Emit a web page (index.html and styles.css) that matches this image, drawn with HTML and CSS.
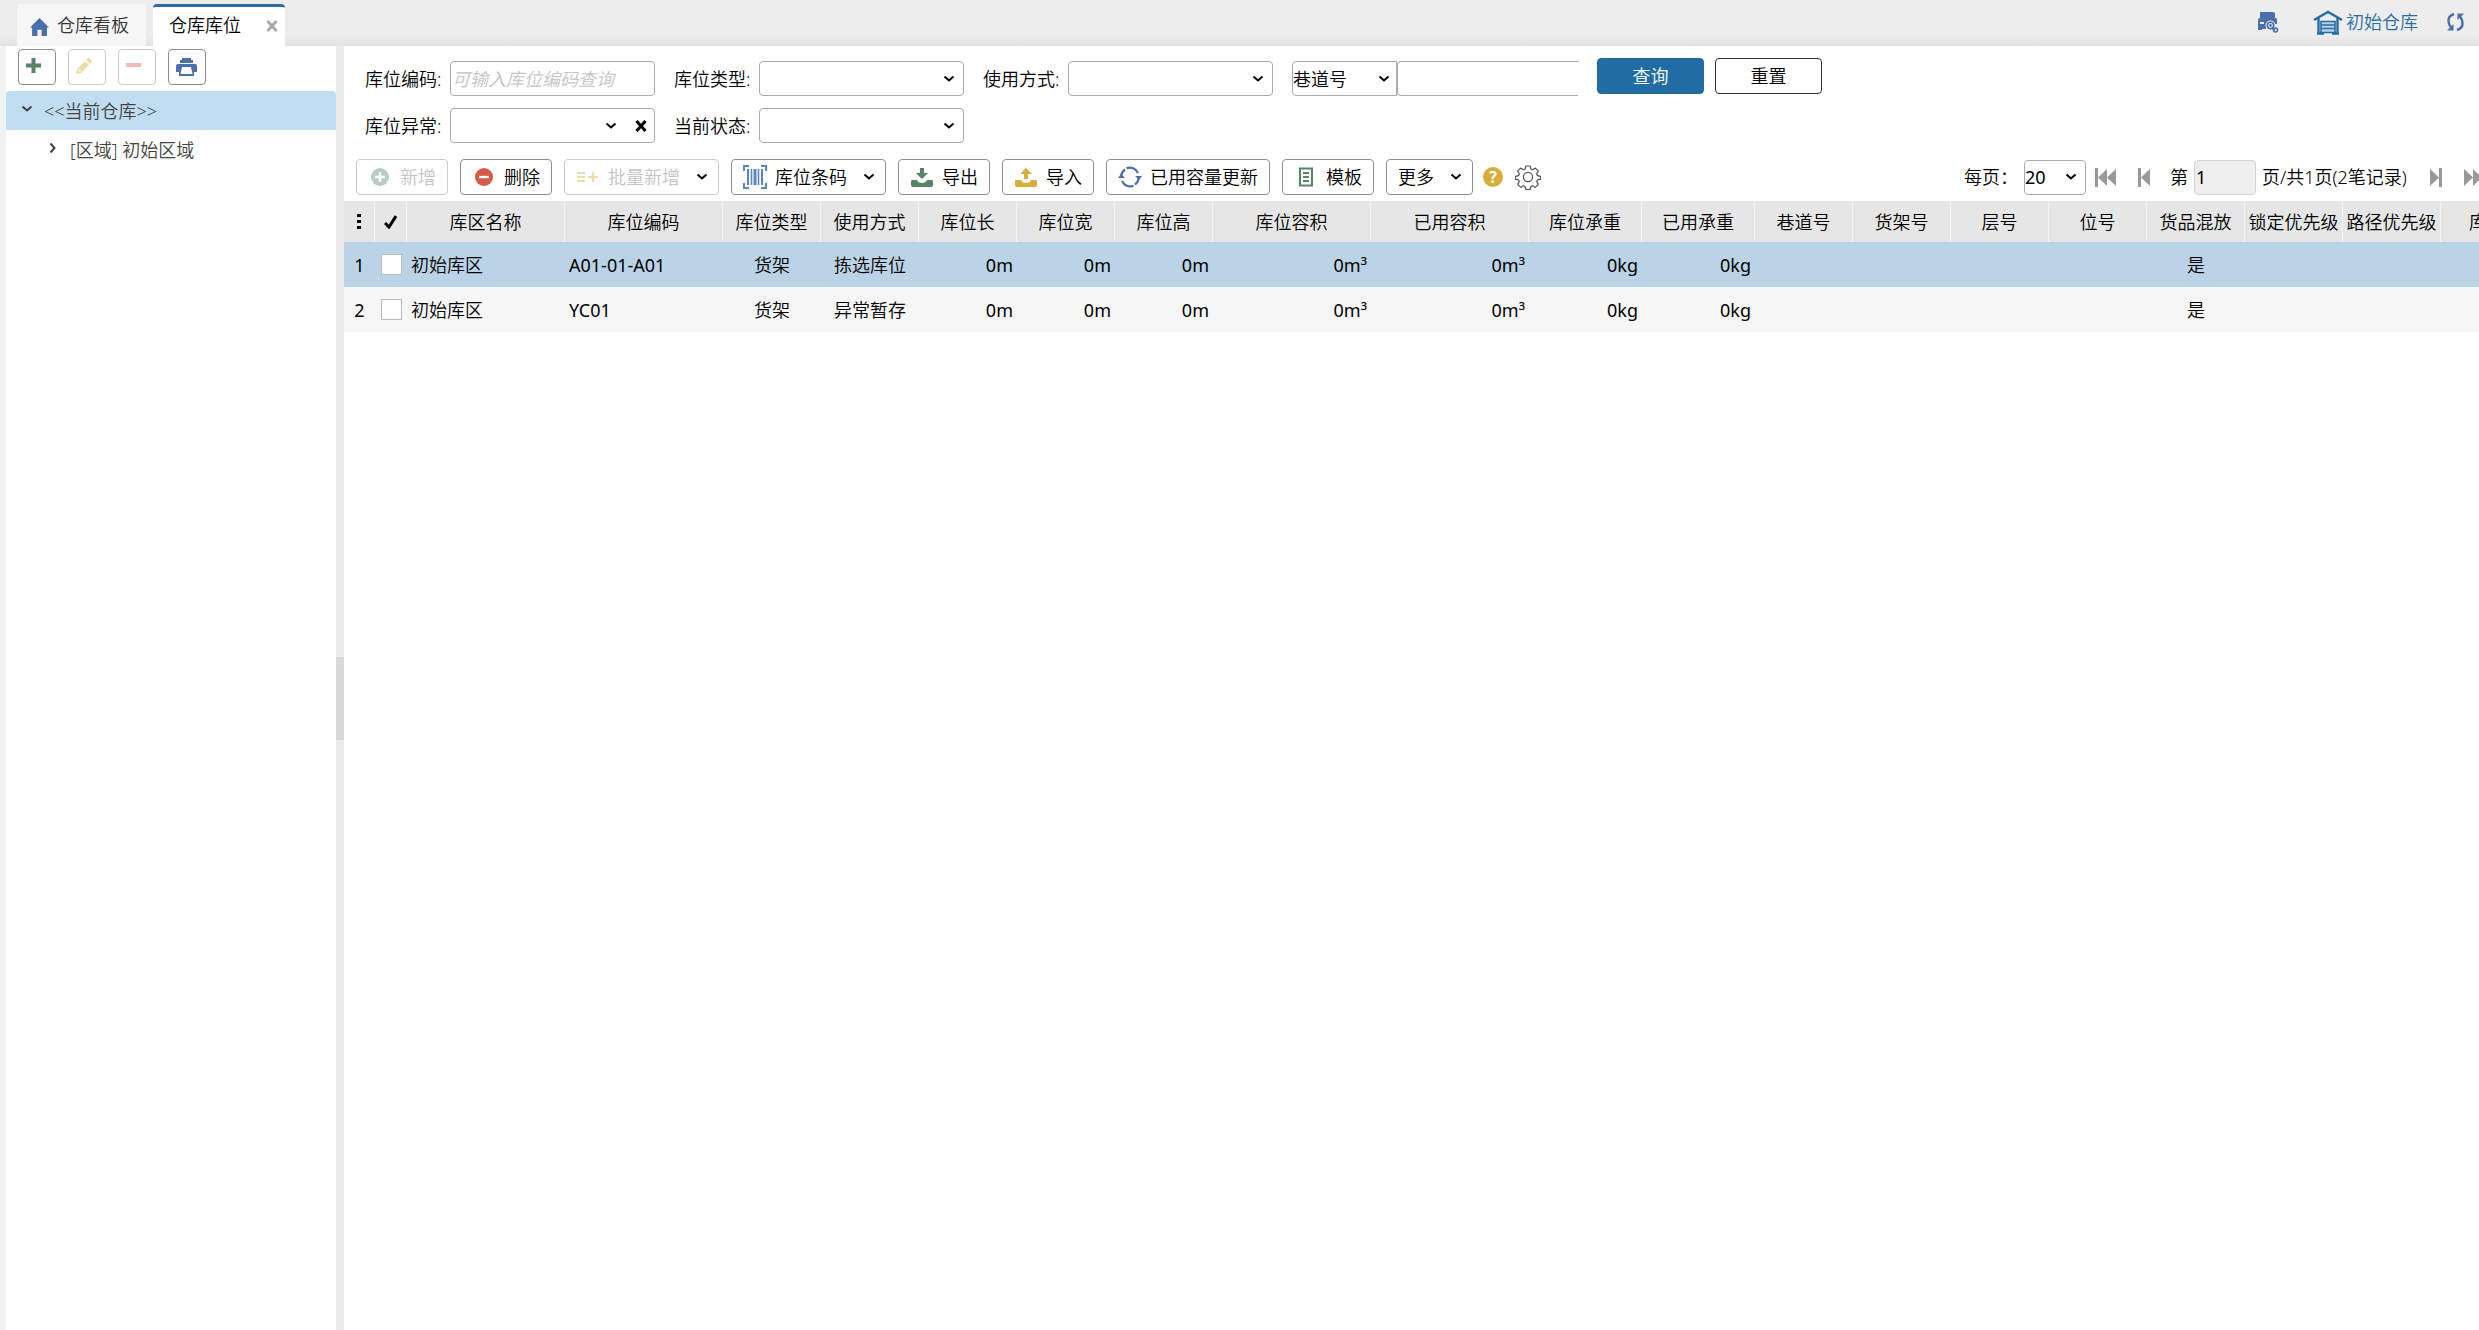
FILE: index.html
```html
<!DOCTYPE html>
<html lang="zh-CN">
<head>
<meta charset="utf-8">
<title>仓库库位</title>
<link rel="stylesheet" href="styles.css">
</head>
<body>
<svg class="sprite" aria-hidden="true">
  <symbol id="caret" viewBox="0 0 12 8"><path d="M1.500 1.500 6 5.500 10.500 1.500" fill="none" stroke="currentColor" stroke-width="2"/></symbol>
  <symbol id="cross" viewBox="0 0 12 12"><path d="M1.500 1 10.500 11M10.500 1 1.500 11" fill="none" stroke="currentColor" stroke-width="3"/></symbol>
  <symbol id="tray" viewBox="0 0 22 19"><path d="M1 12h5q1 3 5 3t5-3h5q1 0 1 2v3q0 2-2 2H2q-2 0-2-2v-3q0-2 1-2z" fill="currentColor"/></symbol>
</svg>

<header class="topbar">
  <nav class="tabs">
    <a class="tab" href="#board">
      <svg class="home" viewBox="0 0 18 17"><path d="M9 0 18 9h-2v8h-5v-6H7v6H2V9H0z" fill="currentColor"/></svg>
      仓库看板
    </a>
    <div class="tab tab-active">
      <a href="#location">仓库库位</a>
      <button class="tab-close" aria-label="关闭"><svg width="12" height="12"><use href="#cross"/></svg></button>
    </div>
  </nav>
  <div class="top-tools">
    <button class="plain blue" aria-label="打印设置">
      <svg width="22" height="22" viewBox="0 0 22 22"><path d="M3 1h13l2 1v5h1q1 0 1 2v4H9v5H5v1H1V9q0-2 2-2z" fill="currentColor"/><path d="M3 11h4v2H3z" fill="#ededed"/><g fill="none" stroke="#ededed" stroke-width="4"><circle cx="13.500" cy="14.500" r="3"/><path d="M14 15l4 4"/></g><g fill="none" stroke="currentColor" stroke-width="1.600"><circle cx="13.500" cy="14.500" r="3.200"/><circle cx="13.500" cy="14.500" r=".6"/><path d="M15 17l3 2"/><circle cx="18.500" cy="19" r="2"/></g></svg>
    </button>
    <a class="warehouse" href="#warehouse">
      <svg width="30" height="25" viewBox="0 0 30 25"><path d="M1 10 15 2l14 8M5.500 8v15.500M24.500 8v15.500M4 23.500h7M19 23.500h7" fill="none" stroke="currentColor" stroke-width="2.400"/><path d="M8 11.500h14v11H8zM8 15h14M8 18.500h14" fill="#b9d3e8" stroke="currentColor" stroke-width="1.600"/></svg>
      初始仓库
    </a>
    <button class="plain blue" aria-label="刷新">
      <svg width="19" height="20" viewBox="0 0 19 20"><path d="M8 2Q2 4 2.500 9T6 16M11 18q6-2 5.500-7T13 4" fill="none" stroke="currentColor" stroke-width="2.400"/><path d="M1 18.500h6.500V12zM18 1.500h-6.500V8z" fill="currentColor"/></svg>
    </button>
  </div>
</header>

<main class="layout">
  <aside class="sidebar">
    <div class="side-tools">
      <button class="side-btn green" aria-label="新增"><svg width="15" height="15"><path d="M5.500 0h4v5.500H15v4H9.500V15h-4V9.500H0v-4h5.500z" fill="currentColor"/></svg></button>
      <button class="side-btn pale-gold" aria-label="编辑" disabled><svg width="16" height="16" viewBox="0 0 16 16"><path d="M0 16 1 11 9 3l4 4-8 8zM10 2l2-2q1-.5 2 .5L15.500 2q1 1 0 2L14 6z" fill="currentColor"/><path d="M2.500 11.500 4.500 13.500" stroke="#fff" stroke-width="1.500"/></svg></button>
      <button class="side-btn pale-red" aria-label="删除" disabled><svg width="15" height="15"><path d="M0 5h15v4H0z" fill="currentColor"/></svg></button>
      <button class="side-btn blue" aria-label="打印"><svg width="21" height="19" viewBox="0 0 21 19"><path d="M6 0h9v2h2v3H4V2h2zM2 6h17q2 0 2 2v6h-3v4H3v-4H0V8q0-2 2-2z" fill="currentColor"/><path d="M6 9h9l1.500 7h-12z" fill="#fff"/></svg></button>
    </div>
    <ul class="tree">
      <li class="node node-selected"><svg width="12" height="8"><use href="#caret"/></svg><span>&lt;&lt;当前仓库&gt;&gt;</span></li>
      <li class="node node-child"><svg width="8" height="12" viewBox="0 0 8 12"><path d="M1.500 1.500 5.500 6 1.500 10.500" fill="none" stroke="currentColor" stroke-width="2"/></svg><span>[区域] 初始区域</span></li>
    </ul>
  </aside>
  <div class="splitter"><span></span></div>

  <section class="content">
    <form class="filters">
      <div class="fields">
        <div class="field"><label for="code">库位编码:</label><input id="code" class="box" type="text" placeholder="可输入库位编码查询"></div>
        <div class="field"><label for="type">库位类型:</label><span class="pick"><select id="type" class="box"><option></option></select><svg width="12" height="8"><use href="#caret"/></svg></span></div>
        <div class="field"><label for="use">使用方式:</label><span class="pick"><select id="use" class="box"><option></option></select><svg width="12" height="8"><use href="#caret"/></svg></span></div>
        <div class="field field-pair"><span class="pick pick-aisle"><select class="box" aria-label="条件"><option>巷道号</option></select><svg width="12" height="8"><use href="#caret"/></svg></span><input class="box aisle" type="text" aria-label="巷道号"></div>
        <div class="field"><label for="abn">库位异常:</label><span class="pick pick-clear"><select id="abn" class="box"><option></option></select><svg width="12" height="8"><use href="#caret"/></svg><svg class="clear" width="12" height="12"><use href="#cross"/></svg></span></div>
        <div class="field"><label for="state">当前状态:</label><span class="pick"><select id="state" class="box"><option></option></select><svg width="12" height="8"><use href="#caret"/></svg></span></div>
      </div>
      <div class="actions">
        <button type="button" class="act act-main">查询</button>
        <button type="reset" class="act">重置</button>
      </div>
    </form>

    <div class="toolbar">
      <button class="btn" disabled><i><svg width="18" height="18"><circle cx="9" cy="9" r="9" fill="#b9cdc3"/><path d="M9 4v10M4 9h10" stroke="#fff" stroke-width="2.400"/></svg></i>新增</button>
      <button class="btn"><i><svg width="18" height="18"><circle cx="9" cy="9" r="9" fill="#d65a4a"/><path d="M4 9h10" stroke="#fff" stroke-width="2.400"/></svg></i>删除</button>
      <button class="btn" disabled><i class="pale-gold"><svg width="22" height="12"><path d="M0 2h8M0 6h8M0 10h8M11 6h10M16 1v10" stroke="currentColor" stroke-width="2.200"/></svg></i>批量新增<svg class="drop" width="12" height="8"><use href="#caret"/></svg></button>
      <button class="btn"><i class="steel"><svg width="24" height="24" fill="none" stroke="currentColor"><path d="M6 1H1v5M18 1h5v5M6 23H1v-5M18 23h5v-5" stroke-width="2"/><path d="M5 4v16M19 4v16" stroke-width="2"/><path d="M8.500 4v16M15.500 4v16" stroke-width="1.600"/><path d="M12 4v16" stroke-width="3"/></svg></i>库位条码<svg class="drop" width="12" height="8"><use href="#caret"/></svg></button>
      <button class="btn"><i class="green"><svg width="22" height="19"><use href="#tray"/><path d="M9 0h4v5h4l-6 6-6-6h4z" fill="currentColor"/></svg></i>导出</button>
      <button class="btn"><i class="gold"><svg width="22" height="19"><use href="#tray"/><path d="M9 11h4V6h4l-6-6-6 6h4z" fill="currentColor"/></svg></i>导入</button>
      <button class="btn"><i class="blue"><svg width="24" height="22" viewBox="0 0 24 22"><path d="M3.200 10A9 9 0 0 1 7 3.500M8.500 2.200A9 9 0 0 1 20 7M20.800 12a9 9 0 0 1-3.800 6.500M15.500 19.800A9 9 0 0 1 4 15" fill="none" stroke="currentColor" stroke-width="2.200"/><path d="M0 12 3 8l4 4zM24 10l-3 4-4-4z" fill="currentColor"/></svg></i>已用容量更新</button>
      <button class="btn"><i class="green"><svg width="16" height="20" fill="none" stroke="currentColor" stroke-width="2"><path d="M2 1.500h12v17H2z"/><path d="M5 6h6M5 10h6M5 14h6" /></svg></i>模板</button>
      <button class="btn">更多<svg class="drop" width="12" height="8"><use href="#caret"/></svg></button>
      <button class="plain help" aria-label="帮助"><b>?</b></button>
      <button class="plain" aria-label="设置"><svg width="26" height="26" viewBox="-.5 -.5 17 17" fill="none" stroke="#555" stroke-width=".8"><circle cx="8" cy="8" r="3"/><path d="M6.600.8h2.800l.5 2 1.100.5 1.800-1.100 2 2-1.100 1.800.5 1.100 2 .5v1.800l-2 .5-.5 1.100 1.100 1.800-2 2-1.800-1.100-1.100.5-.5 2H6.600l-.5-2-1.100-.5-1.800 1.100-2-2 1.100-1.800-.5-1.100-2-.5V7.600l2-.5.5-1.100-1.100-1.800 2-2L5 3.300l1.100-.5z" stroke-linejoin="round"/></svg></button>

      <div class="pager">
        <label class="per" for="size">每页：</label>
        <span class="pick pick-size"><select id="size" class="box"><option>20</option></select><svg width="12" height="8"><use href="#caret"/></svg></span>
        <button class="plain nav first" aria-label="首页"><svg width="22" height="19"><path d="M0 0h3v19H0zM12 1v17L3 9.500zM21 1v17l-9-8.500z" fill="currentColor"/></svg></button>
        <button class="plain nav prev" aria-label="上一页"><svg width="13" height="19"><path d="M0 0h3v19H0zM12 1v17L3 9.500z" fill="currentColor"/></svg></button>
        <label for="page">第</label>
        <input id="page" class="box page" type="text" value="1">
        <span class="total">页/共1页(2笔记录)</span>
        <button class="plain nav next" aria-label="下一页"><svg width="13" height="19"><path d="M9 0h3v19H9zM0 1v17l9-8.500z" fill="currentColor"/></svg></button>
        <button class="plain nav" aria-label="末页"><svg width="22" height="19"><path d="M18 0h3v19h-3zM9 1v17l9-8.500zM0 1v17l9-8.500z" fill="currentColor"/></svg></button>
      </div>
    </div>

    <div class="grid-wrap">
      <table class="grid">
        <colgroup><col class="c-no"><col class="c-check"><col class="c-l"><col class="c-l"><col class="c-s"><col class="c-s"><col class="c-s"><col class="c-s"><col class="c-s"><col class="c-l"><col class="c-l"><col class="c-m"><col class="c-m"><col class="c-s"><col class="c-s"><col class="c-s"><col class="c-s"><col class="c-s"><col class="c-s"><col class="c-s"><col class="c-s"></colgroup>
        <thead>
          <tr><th><svg width="4" height="15"><path d="M0 0h4v3H0zM0 6h4v3H0zM0 12h4v3H0z"/></svg></th><th><svg width="13" height="14" viewBox="0 0 13 14"><path d="M1 8 5 12 12 1" fill="none" stroke="#000" stroke-width="3"/></svg></th><th>库区名称</th><th>库位编码</th><th>库位类型</th><th>使用方式</th><th>库位长</th><th>库位宽</th><th>库位高</th><th>库位容积</th><th>已用容积</th><th>库位承重</th><th>已用承重</th><th>巷道号</th><th>货架号</th><th>层号</th><th>位号</th><th>货品混放</th><th>锁定优先级</th><th>路径优先级</th><th class="cut">库</th></tr>
        </thead>
        <tbody>
          <tr class="row-selected"><td class="mid latin">1</td><td class="mid"><input type="checkbox" aria-label="选择第1行"></td><td>初始库区</td><td class="latin">A01-01-A01</td><td class="mid">货架</td><td class="mid">拣选库位</td><td class="num">0m</td><td class="num">0m</td><td class="num">0m</td><td class="num">0m³</td><td class="num">0m³</td><td class="num">0kg</td><td class="num">0kg</td><td></td><td></td><td></td><td></td><td class="mid">是</td><td></td><td></td><td></td></tr>
          <tr><td class="mid latin">2</td><td class="mid"><input type="checkbox" aria-label="选择第2行"></td><td>初始库区</td><td class="latin">YC01</td><td class="mid">货架</td><td class="mid">异常暂存</td><td class="num">0m</td><td class="num">0m</td><td class="num">0m</td><td class="num">0m³</td><td class="num">0m³</td><td class="num">0kg</td><td class="num">0kg</td><td></td><td></td><td></td><td></td><td class="mid">是</td><td></td><td></td><td></td></tr>
        </tbody>
      </table>
    </div>
  </section>
</main>
</body>
</html>
```
FILE: styles.css
```css
* { box-sizing: border-box; }

body {
  margin: 0;
  min-height: 100vh;
  display: flex;
  flex-direction: column;
  background: #fff;
  color: #000;
  overflow-x: hidden;
}

body, button, input, select {
  font: 350 18px/24px "Noto Sans", "Noto Sans CJK SC", sans-serif;
}

svg { display: block; flex: none; }
a { color: inherit; text-decoration: none; }
.sprite { position: absolute; width: 0; height: 0; }

.plain { padding: 0; border: 0; background: none; }

.green { color: #568465; }
.gold { color: #d8ae3a; }
.blue { color: #4a6fac; }
.steel { color: #5b86bd; }
.pale-gold { color: #efdca8; }
.pale-red { color: #efbdb9; }

/* top bar */
.topbar {
  display: flex;
  justify-content: space-between;
  height: 46px;
  padding: 4px 14px 0 17px;
  background: linear-gradient(#ededed 34px, #e3e3e3);
}
.tabs { display: flex; gap: 7px; }
.tab {
  display: flex;
  align-items: center;
  gap: 8px;
  padding: 0 17px 0 13px;
  border-radius: 4px 4px 0 0;
  background: #f6f6f6;
  color: #333;
}
.home { width: 19px; height: 18px; color: #4a6fac; margin-top: 4px; }
.tab-active {
  gap: 25px;
  padding: 0 7px 3px 16px;
  border-top: 3px solid #2e6ca4;
  background: #fff;
  color: #000;
}
.tab-close { padding: 2px 0 0; border: 0; background: none; color: #aaa; }
.top-tools { display: flex; align-items: center; padding-bottom: 6px; }
.warehouse { display: flex; align-items: center; gap: 3px; margin: 0 28px 0 34px; color: #246da5; }

/* layout */
.layout { flex: 1; display: flex; }
.sidebar { width: 336px; flex: none; border-left: 6px solid #f2f2f2; }
.side-tools { display: flex; gap: 12px; padding: 3px 12px 6px; }
.side-btn {
  display: flex;
  align-items: flex-start;
  width: 38px;
  height: 36px;
  padding: 8px 7px;
  border: 1px solid #8f8f8f;
  border-radius: 4px;
  background: #fff;
}
.side-btn:disabled { border-color: #ccc; }
.tree { margin: 0; padding: 0; list-style: none; color: #444; }
.node { display: flex; align-items: center; gap: 11px; height: 39px; padding-left: 15px; }
.node svg { margin-bottom: 4px; }
.node-selected { background: #c1ddf1; border-radius: 4px 4px 0 0; }
.node-child { padding-left: 43px; gap: 13px; }
.splitter {
  width: 8px;
  flex: none;
  display: flex;
  align-items: center;
  padding-top: 20px;
  background: #ececec;
}
.splitter span { width: 8px; height: 83px; background: #d8d8d8; }
.content { flex: 1; min-width: 0; overflow: hidden; }

/* filters */
.filters { display: flex; gap: 15px; padding: 12px 21px 16px; }
.fields {
  display: grid;
  grid-template-columns: repeat(4, 290px);
  column-gap: 19px;
  row-gap: 12px;
  padding-top: 3px;
}
.field { display: flex; align-items: center; }
.field label { width: 85px; flex: none; }
.box {
  width: 205px;
  height: 35px;
  padding: 0 1px;
  border: 1px solid #aaa;
  border-radius: 4px;
  background: #fff;
  color: #000;
  appearance: none;
  outline: 0;
}
.box::placeholder { color: #c4c4c4; font-style: italic; opacity: 1; }
.pick { display: grid; align-items: center; }
.pick > * { grid-area: 1 / 1; }
.pick > svg { justify-self: end; margin-right: 9px; pointer-events: none; }
.pick-clear > svg { margin-right: 38px; }
.pick-clear > .clear { margin-right: 8px; }
.field-pair { overflow: hidden; padding-right: 4px; }
.pick-aisle { width: 105px; flex: none; }
.pick-aisle .box { width: 105px; padding: 0; border-radius: 4px 0 0 4px; }
.pick-aisle > svg { margin-right: 7px; }
.aisle { width: 181px; border-right: 0; border-radius: 4px 0 0 4px; }
.actions { display: flex; gap: 11px; }
.act {
  width: 107px;
  height: 36px;
  padding: 0;
  border: 1px solid #333;
  border-radius: 4px;
  background: #fff;
  color: #000;
}
.act-main { border-color: #226ca6; background: #226ca6; color: #fff; }

/* toolbar */
.toolbar { display: flex; align-items: center; gap: 12px; padding: 0 0 6px 12px; }
.btn {
  display: flex;
  align-items: center;
  flex: none;
  height: 36px;
  padding: 0 11px;
  border: 1px solid #8f8f8f;
  border-radius: 4px;
  background: #fff;
  color: #000;
  white-space: nowrap;
}
.btn:disabled { border-color: #ccc; color: #c4c4c4; }
.btn i { display: flex; justify-content: center; width: 24px; margin-right: 8px; }
.btn .drop { margin: 0 -1px 0 16px; color: #000; }
.help b {
  display: block;
  width: 20px;
  height: 20px;
  border-radius: 50%;
  background: #d8ae3a;
  color: #fff;
  font-size: 16px;
  line-height: 20px;
  text-align: center;
}
.help { margin-left: -2px; }
.pager {
  display: flex;
  align-items: center;
  flex: none;
  gap: 6px;
  margin: 0 -7px 0 auto;
  white-space: nowrap;
}
.per { width: 54px; }
.pick-size .box, .page { font-weight: 400; }
.pick-size .box { width: 62px; padding: 0; }
.nav { color: #999; }
.first { margin-left: 3px; }
.prev { margin: 0 13px 0 15px; }
.next { margin: 0 15px 0 14px; }
.page { width: 62px; border-color: #d4d4d4; background: #eee; }
.total { min-width: 148px; }

/* data grid */
.grid-wrap { overflow: hidden; }
.grid { width: 2195px; table-layout: fixed; border-collapse: separate; border-spacing: 0; }
.c-no { width: 31px; }
.c-check { width: 32px; }
.c-l { width: 158px; }
.c-m { width: 113px; }
.c-s { width: 98px; }
.grid th, .grid td { padding: 0 4px; white-space: nowrap; }
.grid th {
  height: 41px;
  padding: 0;
  border-right: 1px solid #f4f4f4;
  background: #e6e6e6;
  font-weight: 350;
}
.grid th svg { margin: 0 auto; }
.grid th.cut { padding-left: 28px; text-align: left; }
.grid td { height: 45px; background: #f6f6f6; }
.grid .row-selected td { background: #bbd3e6; }
.grid .mid { padding: 0; text-align: center; }
.grid .num { text-align: right; }
.grid .num, .grid .latin { font-weight: 400; }
.grid input {
  display: block;
  width: 21px;
  height: 21px;
  margin: 0 auto;
  border: 1px solid #bbb;
  background: #fff;
  appearance: none;
}
```
